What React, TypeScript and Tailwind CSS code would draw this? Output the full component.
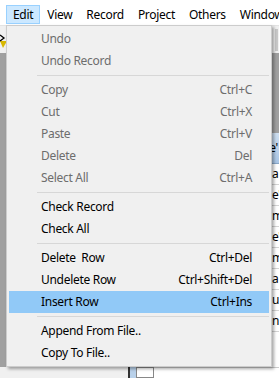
import React from 'react';

type Item =
  | { kind: 'item'; label: string; shortcut?: string; disabled?: boolean; active?: boolean }
  | { kind: 'sep' };

const ITEMS: Item[] = [
  { kind: 'item', label: 'Undo', disabled: true },
  { kind: 'item', label: 'Undo Record', disabled: true },
  { kind: 'sep' },
  { kind: 'item', label: 'Copy', shortcut: 'Ctrl+C', disabled: true },
  { kind: 'item', label: 'Cut', shortcut: 'Ctrl+X', disabled: true },
  { kind: 'item', label: 'Paste', shortcut: 'Ctrl+V', disabled: true },
  { kind: 'item', label: 'Delete', shortcut: 'Del', disabled: true },
  { kind: 'item', label: 'Select All', shortcut: 'Ctrl+A', disabled: true },
  { kind: 'sep' },
  { kind: 'item', label: 'Check Record' },
  { kind: 'item', label: 'Check All' },
  { kind: 'sep' },
  { kind: 'item', label: 'Delete  Row', shortcut: 'Ctrl+Del' },
  { kind: 'item', label: 'Undelete Row', shortcut: 'Ctrl+Shift+Del' },
  { kind: 'item', label: 'Insert Row', shortcut: 'Ctrl+Ins', active: true },
  { kind: 'sep' },
  { kind: 'item', label: 'Append From File..' },
  { kind: 'item', label: 'Copy To File..' },
];

const MENUS = ['Edit', 'View', 'Record', 'Project', 'Others', 'Window'];

// letters of the grid column peeking out right of the popup
const ROW_TEXT = ['a', "e'", 'm', "e'", 'm', 'a', 'u', 'n'];

export default function App() {
  return (
    <div
      className="relative w-[279px] h-[378px] overflow-hidden bg-[#f0f0f0] text-[12px] text-black tracking-[-0.3px]"
      style={{ fontFamily: '"Noto Sans", "Open Sans", sans-serif' }}
    >
      {/* Menu bar */}
      <div className="h-[25px] bg-white flex items-end pl-[6px] whitespace-nowrap">
        {MENUS.map((m, i) => (
          <div
            key={m}
            className={`h-[19px] mb-[1px] flex items-center px-[6px] border leading-none ${
              i === 0 ? 'bg-[#cce8ff] border-[#99d1ff]' : 'border-transparent'
            }`}
          >
            {m}
          </div>
        ))}
      </div>

      {/* Toolbar */}
      <div className="h-[28px] bg-[#f0f0f0] border-t border-[#e3e3e3] flex items-center justify-between">
        <svg width="7" height="15" viewBox="0 0 7 15" className="mt-[2px]">
          <polygon points="0,8 7,8 3,15" fill="#d8b800" />
          <path d="M0 2 L4 5 L0 8" stroke="#000" strokeWidth="1.3" fill="none" />
        </svg>
        <div className="w-[3px] h-[22px] bg-[#c8c8c8] mr-[1px]" />
      </div>

      {/* Workspace */}
      <div className="h-[314px] bg-[#a0a0a0] flex flex-col">
        <div className="h-[80px]" />
        <div className="flex-1 ml-[128px] bg-white flex flex-col">
          <div className="h-[31px] bg-gradient-to-b from-[#cfe0f2] to-[#a9c6e6] border-b border-[#8aa8c8] flex items-center justify-end pr-[1px]">
            <span className="leading-none">e'</span>
          </div>
          {ROW_TEXT.map((t, i) => (
            <div
              key={i}
              className="h-[21px] border-b border-[#d4d4d4] flex items-center justify-end leading-none"
            >
              <span className="w-[7px] overflow-hidden">{t}</span>
            </div>
          ))}
        </div>
      </div>

      {/* Bottom strip */}
      <div className="h-[11px] flex">
        <div className="w-[128px] bg-[#f0f0f0]" />
        <div className="w-[2px] bg-[#333]" />
        <div className="w-[6px] bg-[#b9d1ea]" />
        <div className="w-[18px] bg-white border border-[#888]" />
        <div className="flex-1 bg-white border-t border-[#ccc]" />
      </div>

      {/* Edit popup menu */}
      <div className="absolute left-[6px] top-[25px] w-[266px] bg-[#f0f0f0] border border-[#cccccc] p-[2px] shadow-[2px_2px_3px_rgba(0,0,0,0.35)] whitespace-pre">
        {ITEMS.map((it, i) =>
          it.kind === 'sep' ? (
            <div key={i} className="h-[7px] pl-[28px] pt-[3px]">
              <div className="h-px bg-[#d7d7d7]" />
            </div>
          ) : (
            <div
              key={i}
              className={`h-[22px] flex items-center justify-between pl-[32px] pr-[17px] ${
                it.active ? 'bg-[#91c9f7]' : ''
              } ${it.disabled ? 'text-[#6d6d6d]' : 'text-black'}`}
            >
              <span>{it.label}</span>
              {it.shortcut && <span>{it.shortcut}</span>}
            </div>
          )
        )}
      </div>
    </div>
  );
}
